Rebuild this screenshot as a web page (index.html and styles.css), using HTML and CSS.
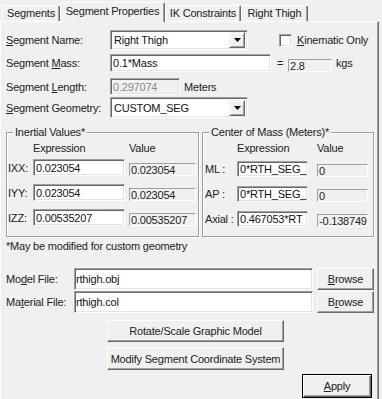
FILE: index.html
```html
<!DOCTYPE html>
<html>
<head>
    <title>Segment Properties</title>
    <meta name="viewport" content="width=device-width, initial-scale=1.0">
    <link rel="stylesheet" href="styles.css">
</head>
<body>

<div class="dialog">
    <div class="tabs">
        <div class="tab tab-seg">Segments</div>
        <div class="tab tab-props active">Segment Properties</div>
        <div class="tab tab-ik">IK Constraints</div>
        <div class="tab tab-thigh">Right Thigh</div>
    </div>

    <div class="panel">
        <div class="row row-name">
            <span class="lbl"><u>S</u>egment Name:</span>
            <div class="combo">
                <span class="combo-text">Right Thigh</span>
                <span class="drop"><svg width="7" height="4" viewBox="0 0 7 4"><polygon points="0,0 7,0 3.5,4" fill="#000"/></svg></span>
            </div>
            <label class="check"><span class="check-box"></span><u>K</u>inematic Only</label>
        </div>

        <div class="row row-mass">
            <span class="lbl">Segment <u>M</u>ass:</span>
            <div class="edit mass-edit">0.1*Mass</div>
            <span class="eq">=</span>
            <div class="static mass-val">2.8</div>
            <span class="unit">kgs</span>
        </div>

        <div class="row row-length">
            <span class="lbl">Segment <u>L</u>ength:</span>
            <div class="edit disabled length-edit">0.297074</div>
            <span class="unit meters">Meters</span>
        </div>

        <div class="row row-geom">
            <span class="lbl"><u>S</u>egment Geometry:</span>
            <div class="combo combo-geom">
                <span class="combo-text">CUSTOM_SEG</span>
                <span class="drop"><svg width="7" height="4" viewBox="0 0 7 4"><polygon points="0,0 7,0 3.5,4" fill="#000"/></svg></span>
            </div>
        </div>

        <div class="groups">
            <div class="group group-inertia">
                <span class="legend">Inertial Values*</span>
                <div class="grow ghead">
                    <span class="glbl"></span>
                    <span class="gexpr">Expression</span>
                    <span class="gval">Value</span>
                </div>
                <div class="grow gr1">
                    <span class="glbl">IXX:</span>
                    <div class="edit gexpr">0.023054</div>
                    <div class="static gval">0.023054</div>
                </div>
                <div class="grow">
                    <span class="glbl">IYY:</span>
                    <div class="edit gexpr">0.023054</div>
                    <div class="static gval">0.023054</div>
                </div>
                <div class="grow">
                    <span class="glbl">IZZ:</span>
                    <div class="edit gexpr">0.00535207</div>
                    <div class="static gval">0.00535207</div>
                </div>
            </div>

            <div class="group group-com">
                <span class="legend">Center of Mass (Meters)*</span>
                <div class="grow ghead">
                    <span class="glbl"></span>
                    <span class="gexpr">Expression</span>
                    <span class="gval">Value</span>
                </div>
                <div class="grow gr1">
                    <span class="glbl">ML :</span>
                    <div class="edit gexpr">0*RTH_SEG_</div>
                    <div class="static gval">0</div>
                </div>
                <div class="grow">
                    <span class="glbl">AP :</span>
                    <div class="edit gexpr">0*RTH_SEG_</div>
                    <div class="static gval">0</div>
                </div>
                <div class="grow">
                    <span class="glbl">Axial :</span>
                    <div class="edit gexpr">0.467053*RT</div>
                    <div class="static gval">-0.138749</div>
                </div>
            </div>
        </div>

        <div class="note">*May be modified for custom geometry</div>

        <div class="row file-row model-row">
            <span class="flbl">Mo<u>d</u>el File:</span>
            <div class="edit file-edit">rthigh.obj</div>
            <button class="btn browse"><u>B</u>rowse</button>
        </div>
        <div class="row file-row material-row">
            <span class="flbl">Ma<u>t</u>erial File:</span>
            <div class="edit file-edit">rthigh.col</div>
            <button class="btn browse">B<u>r</u>owse</button>
        </div>

        <button class="btn wide rotate">Rotate/Scale Graphic Model</button>
        <button class="btn wide modify">Modify Segment Coordinate System</button>
        <div class="apply-row">
            <button class="btn default apply"><u>A</u>pply</button>
        </div>
    </div>
</div>

</body>
</html>
```

FILE: styles.css
```css
* {
    box-sizing: border-box;
}
body {
    margin: 0;
    background: #f0f0f0;
    font-family: 'Liberation Sans', Arial, sans-serif;
    font-size: 11px;
    color: #222;
    letter-spacing: -0.2px;
    overflow: hidden;
}
u {
    text-decoration: underline;
    text-underline-offset: 1px;
}

/* tabs */
.tabs {
    display: flex;
    align-items: flex-start;
    height: 22px;
    padding-left: 2px;
    margin-bottom: -1px;
    position: relative;
    z-index: 1;
}
.tab {
    height: 16px;
    margin-top: 5px;
    background: #f0f0f0;
    border-top: 1px solid #fff;
    border-left: 1px solid #fff;
    border-right: 1px solid #696969;
    box-shadow: inset -1px 0 0 #a0a0a0;
    border-radius: 2px 2px 0 0;
    text-align: center;
    line-height: 15px;
    white-space: nowrap;
}
.tab.active {
    height: 20px;
    margin-top: 2px;
    line-height: 17px;
}
.tab-seg { width: 58px; }
.tab-props { width: 105px; }
.tab-ik { width: 76px; }
.tab-thigh { width: 67px; }

/* panel */
.panel {
    width: 379px;
    height: 390px;
    border-top: 1px solid #fff;
    border-left: 1px solid #fff;
    border-right: 1px solid #696969;
    box-shadow: inset -1px 0 0 #a0a0a0;
    padding: 8px 0 0 5px;
}
.row {
    display: flex;
    align-items: center;
}
.lbl {
    width: 104px;
    white-space: nowrap;
}

/* edit controls */
.edit {
    background: #fff;
    border: 1px solid;
    border-color: #a0a0a0 #fff #fff #a0a0a0;
    box-shadow: inset 1px 1px 0 #696969, inset -1px -1px 0 #e3e3e3;
    padding: 0 2px;
    white-space: nowrap;
    overflow: hidden;
    color: #111;
    display: flex;
    align-items: center;
}
.edit.disabled {
    background: #f0f0f0;
    color: #8a8a8a;
}
.static {
    border: 1px solid;
    border-color: #a0a0a0 #fff #fff #a0a0a0;
    padding: 0 1px;
    white-space: nowrap;
    overflow: hidden;
    display: flex;
    align-items: center;
    color: #222;
}

.combo {
    width: 138px;
    height: 20px;
    background: #fff;
    border: 1px solid;
    border-color: #a0a0a0 #fff #fff #a0a0a0;
    box-shadow: inset 1px 1px 0 #696969, inset -1px -1px 0 #e3e3e3;
    display: flex;
    align-items: center;
    justify-content: space-between;
    padding: 2px 2px 2px 3px;
    color: #111;
}
.combo-geom {
    height: 21px;
}
.drop {
    width: 16px;
    height: 16px;
    background: #f0f0f0;
    border: 1px solid;
    border-color: #f0f0f0 #696969 #696969 #f0f0f0;
    box-shadow: inset 1px 1px 0 #fff, inset -1px -1px 0 #a0a0a0;
    display: flex;
    align-items: center;
    justify-content: center;
}
.drop svg {
    display: block;
}

.check {
    display: flex;
    align-items: center;
    margin-left: 31px;
    white-space: nowrap;
}
.check-box {
    width: 13px;
    height: 13px;
    background: #fff;
    border: 1px solid;
    border-color: #a0a0a0 #fff #fff #a0a0a0;
    box-shadow: inset 1px 1px 0 #696969, inset -1px -1px 0 #e3e3e3;
    margin-right: 5px;
}

.row-mass {
    margin-top: 4px;
}
.mass-edit {
    width: 161px;
    height: 18px;
}
.eq {
    margin-left: 6px;
    width: 11px;
}
.mass-val {
    width: 44px;
    height: 13px;
    align-self: flex-end;
}
.unit {
    margin-left: 4px;
}
.row-length {
    margin-top: 6px;
}
.length-edit {
    width: 70px;
    height: 17px;
}
.meters {
    margin-left: 4px;
}
.row-geom {
    margin-top: 2px;
}

/* group boxes */
.groups {
    display: flex;
    gap: 3px;
    margin-top: 14px;
}
.group {
    position: relative;
    border: 1px solid #a0a0a0;
    box-shadow: inset 1px 1px 0 #fff, 1px 1px 0 #fff;
    height: 105px;
    padding-top: 8px;
}
.legend {
    position: absolute;
    top: -8px;
    left: 6px;
    padding: 0 2px;
    background: #f0f0f0;
    white-space: nowrap;
    line-height: 14px;
}
.group-inertia {
    width: 193px;
    padding-left: 1px;
}
.group-com {
    width: 172px;
    padding-left: 2px;
}
.grow {
    display: flex;
    margin-top: 8px;
    height: 17px;
}
.grow.ghead {
    margin-top: 0;
    height: 14px;
    align-items: center;
}
.grow.gr1 {
    margin-top: 4px;
}
.grow .glbl {
    display: flex;
    align-items: center;
    white-space: nowrap;
}
.grow .static {
    height: 13px;
    align-self: flex-end;
}
.group-inertia .glbl { width: 25px; }
.group-inertia .gexpr { width: 92px; }
.group-inertia .gval { width: 67px; margin-left: 4px; }
.group-com .glbl { width: 32px; }
.group-com .gexpr { width: 71px; }
.group-com .gval { width: 51px; margin-left: 9px; }
.group-com .grow {
    height: 16px;
    margin-top: 9px;
}
.group-com .grow.ghead {
    height: 14px;
    margin-top: 0;
}
.group-com .grow.gr1 {
    margin-top: 6px;
}

.note {
    margin-top: 3px;
    line-height: 13px;
}

/* files */
.file-row {
    height: 22px;
}
.model-row {
    margin-top: 15px;
}
.material-row {
    margin-top: 1px;
}
.flbl {
    width: 68px;
    white-space: nowrap;
}
.file-edit {
    width: 239px;
    height: 22px;
    padding-left: 1px;
}

/* buttons */
.btn {
    display: block;
    font-family: inherit;
    font-size: 11px;
    letter-spacing: -0.2px;
    color: #222;
    background: #f0f0f0;
    border: 1px solid;
    border-color: #fff #696969 #696969 #fff;
    box-shadow: inset -1px -1px 0 #a0a0a0;
    padding: 0;
    margin: 0;
}
.browse {
    width: 57px;
    height: 22px;
    margin-left: 4px;
}
.wide {
    width: 177px;
    margin-left: 101px;
}
.rotate {
    height: 22px;
    margin-top: 7px;
}
.modify {
    height: 23px;
    margin-top: 5px;
}
.apply-row {
    display: flex;
    margin-top: 4px;
}
.apply {
    width: 70px;
    height: 24px;
    margin-left: 296px;
    border: 1px solid #000;
    box-shadow: inset 1px 1px 0 #fff, inset -1px -1px 0 #696969, inset -2px -2px 0 #a0a0a0;
}
```
